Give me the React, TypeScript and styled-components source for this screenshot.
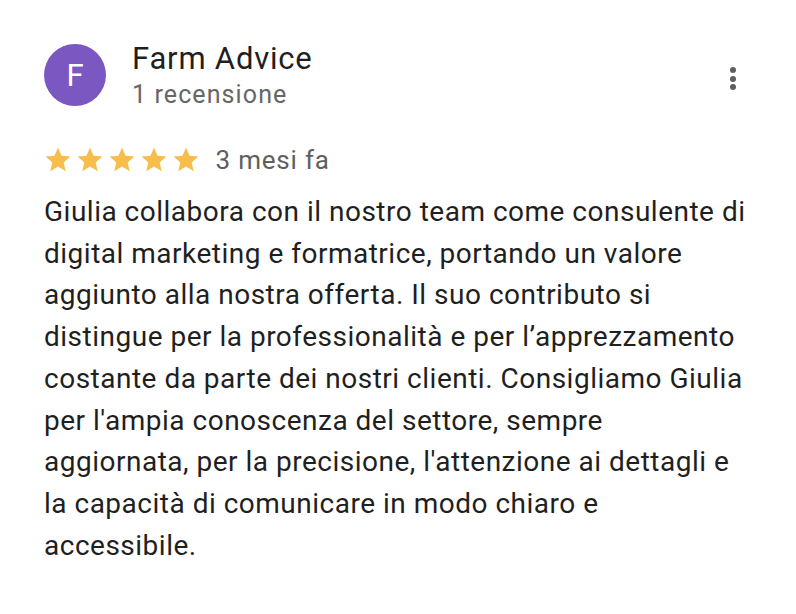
import React from 'react';
import styled, { createGlobalStyle } from 'styled-components';

const GlobalStyle = createGlobalStyle`
  html, body {
    margin: 0;
    padding: 0;
    background: #ffffff;
  }
  body {
    font-family: Roboto, "Noto Sans", Arial, sans-serif;
  }
`;

const Card = styled.div`
  width: 796px;
  height: 614px;
  box-sizing: border-box;
  padding: 44px 43px 0 44px;
  background: #ffffff;
`;

const Header = styled.div`
  display: flex;
  align-items: flex-start;
`;

const Avatar = styled.div`
  width: 62px;
  height: 62px;
  border-radius: 50%;
  background: #7b57c1;
  color: #ffffff;
  display: flex;
  align-items: center;
  justify-content: center;
  font-size: 31px;
  flex-shrink: 0;
`;

const Author = styled.div`
  display: flex;
  flex-direction: column;
  margin-left: 26px;
  margin-top: -3px;
  flex: 1;
`;

const Name = styled.div`
  font-size: 31px;
  line-height: 36px;
  letter-spacing: 0.8px;
  color: #1f1f1f;
`;

const Sub = styled.div`
  margin-top: 3px;
  font-size: 25px;
  line-height: 30px;
  letter-spacing: 1.1px;
  color: #666666;
`;

const MenuButton = styled.div`
  width: 40px;
  height: 40px;
  display: flex;
  flex-direction: column;
  align-items: center;
  justify-content: center;
  gap: 2.5px;
  margin-top: 14.5px;
`;

const Dot = styled.span`
  width: 6px;
  height: 6px;
  border-radius: 50%;
  background: #5f5f5f;
`;

const RatingRow = styled.div`
  display: flex;
  align-items: center;
  height: 30px;
  margin-top: 35px;
  margin-left: -1.5px;
`;

const Stars = styled.div`
  display: flex;
  gap: 2px;
`;

const When = styled.span`
  margin-left: 15px;
  font-size: 26px;
  line-height: 30px;
  letter-spacing: 0.8px;
  color: #5f5f5f;
`;

const Body = styled.p`
  margin: 15.8px 0 0 0;
  font-size: 28px;
  line-height: 41.75px;
  letter-spacing: 0.5px;
  color: #1f1f1f;
  width: 704px;
`;

const Star = () => (
  <svg width="30" height="30" viewBox="0 0 24 24">
    <path
      fill="#f6bd4c"
      d="M12 17.27L18.18 21l-1.64-7.03L22 9.24l-7.19-.61L12 2 9.19 8.63 2 9.24l5.46 4.73L5.82 21z"
    />
  </svg>
);

export default function App() {
  return (
    <>
      <GlobalStyle />
      <Card>
        <Header>
          <Avatar>F</Avatar>
          <Author>
            <Name>Farm Advice</Name>
            <Sub>1 recensione</Sub>
          </Author>
          <MenuButton>
            <Dot />
            <Dot />
            <Dot />
          </MenuButton>
        </Header>
        <RatingRow>
          <Stars>
            {[0, 1, 2, 3, 4].map((i) => (
              <Star key={i} />
            ))}
          </Stars>
          <When>3 mesi fa</When>
        </RatingRow>
        <Body>
          Giulia collabora con il nostro team come consulente di digital marketing e formatrice,
          portando un valore aggiunto alla nostra offerta. Il suo contributo si distingue per la
          professionalità e per l’apprezzamento costante da parte dei nostri clienti. Consigliamo
          Giulia per l'ampia conoscenza del settore, sempre aggiornata, per la precisione,
          l'attenzione ai dettagli e la capacità di comunicare in modo chiaro e accessibile.
        </Body>
      </Card>
    </>
  );
}
